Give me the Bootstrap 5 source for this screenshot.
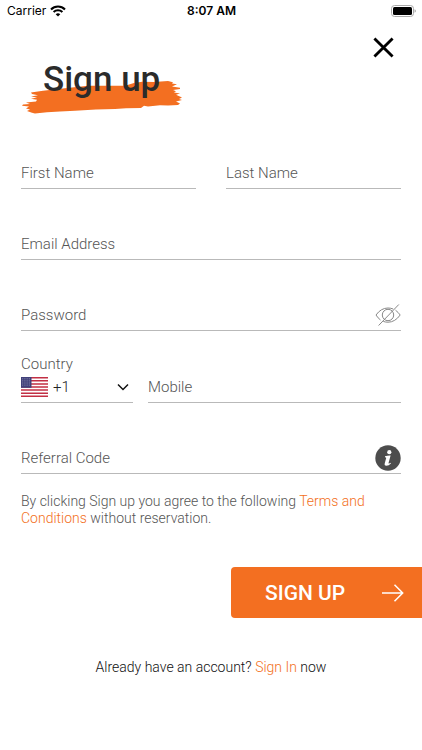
<!DOCTYPE html>
<html lang="en">
<head>
<meta charset="utf-8">
<meta name="viewport" content="width=device-width, initial-scale=1">
<title>Sign up</title>
<link rel="stylesheet" href="https://cdn.jsdelivr.net/npm/bootstrap@5.3.0/dist/css/bootstrap.min.css">
<style>
  body { font-family: Roboto, "Liberation Sans", sans-serif; font-weight: 300; font-size: 15px; color: #222; background: #fff; }
  .status-bar { display: grid; grid-template-columns: 1fr auto 1fr; height: 22px; padding: 0 6px 0 7px; font: 400 12px/22px Inter, sans-serif; color: #000; }
  .status-time { font-weight: 600; }
  .page-x { padding-left: 21px; padding-right: 21px; }
  .close-btn { margin: 15px 7px 0 0; line-height: 0; }
  .title-wrap { position: relative; width: 162px; height: 60px; margin-top: 34px; }
  .title-wrap svg { position: absolute; left: 1px; top: 23px; }
  .title-wrap h1 { position: relative; margin: 0; padding-left: 22px; font-size: 35px; line-height: 48px; font-weight: 500; color: #2b2b2b; white-space: nowrap; }
  .form-fields { margin-top: 41px; }
  .names { display: grid; grid-template-columns: 1fr 1fr; gap: 30px; }
  .field-row { margin-bottom: 39px; }
  .line-field { border-bottom: 1px solid #b9b9b9; height: 32px; }
  .line-field input, .line-field select { border: 0; border-radius: 0; background-color: transparent; padding: 0; height: 31px; font-size: 15px; line-height: 20px; font-weight: 300; color: #222; }
  .line-field input::placeholder { color: #555; opacity: 1; }
  .line-field .form-control:focus, .line-field .form-select:focus { box-shadow: none; }
  .password-row { margin-bottom: 26px; }
  .phone { display: grid; grid-template-columns: 112px 1fr; gap: 15px; align-items: end; }
  .phone label { display: block; line-height: 14px; color: #555; }
  .line-field select.form-select { background-image: url("data:image/svg+xml,%3Csvg xmlns='http://www.w3.org/2000/svg' viewBox='0 0 12 8'%3E%3Cpath d='M1 1.5l5 5 5-5' fill='none' stroke='%23111' stroke-width='1.5'/%3E%3C/svg%3E"); background-size: 12px 8px; background-position: right 4px center; padding-left: 5px; }
  .terms { margin: 19px 0 40px; font-size: 14px; line-height: 17px; color: #555; }
  .accent { color: #f36f21; text-decoration: none; }
  .submit-btn { width: 191px; height: 51px; padding: 0 18px 0 34px; border: 0; border-radius: 4px 0 0 4px; background: #f36f21; color: #fff; font-size: 21px; line-height: 26px; font-weight: 500; }
  .submit-btn:hover { background: #dd611a; color: #fff; }
  .sign-in { margin: 39px 0 0; font-size: 14px; line-height: 20px; color: #111; }
</style>
<script src="https://cdn.jsdelivr.net/npm/bootstrap@5.3.0/dist/js/bootstrap.bundle.min.js" defer></script>
</head>
<body>
<div class="status-bar">
  <div class="d-flex align-items-center gap-1">
    <span>Carrier</span>
    <svg width="16" height="12" viewBox="0 0 16 12" fill="none" stroke="#000" stroke-width="2.1" aria-hidden="true"><path d="M1 4.4a10 10 0 0 1 14 0M3.6 7.1a6.3 6.3 0 0 1 8.800 0"/><path d="M8 11.6L5.700 9.300a3.300 3.300 0 0 1 4.600 0z" fill="#000" stroke="none"/></svg>
  </div>
  <span class="status-time">8:07 AM</span>
  <div class="d-flex align-items-center justify-content-end">
    <svg width="25" height="12" viewBox="0 0 25 12" aria-hidden="true"><rect x=".5" y=".5" width="22" height="11" rx="3" fill="none" stroke="#aaa"/><rect x="2" y="2" width="19" height="8" rx="1.5"/><path d="M23.6 4.2q1.2.6 1.2 1.800t-1.200 1.800z" fill="#999"/></svg>
  </div>
</div>

<header class="page-x d-flex justify-content-between align-items-start">
  <div class="title-wrap">
    <svg width="162" height="36" viewBox="0 0 162 36" fill="#f36f21" aria-hidden="true"><path d="M9 13.500L21 11.800 43 9.300 66 6.800 103 6.700 112 4 120 2.700 132 3 146 2 151 3.200 150 4.500 155 5.300 150 7.500 158 8.800 158 10 151 11 154 12.300 152 13.500 158 14.500 154 15.800 160 18.500 157 20 160 21 154 22.500 158 24.500 156 26 146 26.500 138 26.200 126 27.500 122 26.800 119 29 104 29.200 93 30 74 30.500 53 31.800 38 32.500 25 33.200 13 34.500 10 33.800 5 32 8 30.500 4 29.500 7 27.500 0 26.800 1 25.500 8 25 4 23.500 14 22.500 15 20.800 9 19.800 15 18.600 9 17.500 16 16.300 10 15z"/></svg>
    <h1>Sign up</h1>
  </div>
  <button type="button" class="btn p-0 border-0 close-btn" aria-label="Close">
    <svg width="21" height="21" viewBox="0 0 22 22" fill="none" stroke="#000" stroke-width="3" aria-hidden="true"><path d="M1.500 1.500l19 19M20.500 1.500l-19 19"/></svg>
  </button>
</header>

<form>
  <div class="page-x form-fields">
    <div class="names field-row">
      <div class="line-field"><input class="form-control" type="text" placeholder="First Name" aria-label="First Name"></div>
      <div class="line-field"><input class="form-control" type="text" placeholder="Last Name" aria-label="Last Name"></div>
    </div>
    <div class="line-field field-row"><input class="form-control" type="email" placeholder="Email Address" aria-label="Email Address"></div>
    <div class="line-field password-row d-flex align-items-center">
      <input class="form-control" type="password" placeholder="Password" aria-label="Password">
      <button type="button" class="btn p-0 border-0 lh-1" aria-label="Show password">
        <svg width="26" height="22" viewBox="0 0 26 22" fill="none" stroke="#888" aria-hidden="true"><path d="M5.500 16Q3 14.200 1 11Q6 4 13 4q2.800 0 5.200 1M20.500 6.200Q23.200 8.200 25.200 11Q20 18.200 13 18.200q-2.500 0-4.700-.8M3.600 21.500L23.800.5"/><circle cx="13" cy="11" r="5.700"/></svg>
      </button>
    </div>
    <div class="phone field-row">
      <div>
        <label for="country">Country</label>
        <div class="line-field d-flex align-items-center">
          <svg class="flex-shrink-0" width="27" height="20" viewBox="0 0 27 20" aria-hidden="true"><path fill="#fff" d="M0 0h27v20H0z"/><path d="M0 .77h27M0 3.850h27M0 6.920h27M0 10h27M0 13.080h27M0 16.150h27M0 19.230h27" stroke="#c22f44" stroke-width="1.54"/><path fill="#41417a" d="M0 0h10.500v10.800H0z"/><path d="M1 1.800h9M1 3.900h9M1 6h9M1 8.100h9" stroke="#a5a5c4" stroke-width=".8" stroke-dasharray=".8 1"/></svg>
          <select class="form-select" id="country"><option>+1</option></select>
        </div>
      </div>
      <div class="line-field"><input class="form-control" type="tel" placeholder="Mobile" aria-label="Mobile"></div>
    </div>
    <div class="line-field d-flex align-items-center">
      <input class="form-control" type="text" placeholder="Referral Code" aria-label="Referral Code">
      <button type="button" class="btn p-0 border-0 lh-1" aria-label="About referral codes">
        <svg width="26" height="26" viewBox="0 0 26 26" aria-hidden="true"><circle cx="13" cy="13" r="12.700" fill="#4d4d4d"/><circle cx="14.300" cy="7.200" r="2.100" fill="#fff"/><path d="M10 11.300q2.400-.9 4.600-.9h1l-2 7.300q-.2 1 .4.900.7-.2 1.500-.8l.4.700q-2.100 2.200-4.500 2.200-2.200 0-1.700-2.200l1.500-5.500q.2-.7-1.200-.7z" fill="#fff"/></svg>
      </button>
    </div>
    <p class="terms">By clicking Sign up you agree to the following <a class="accent" href="#terms">Terms and Conditions</a> without reservation.</p>
  </div>
  <div class="d-flex justify-content-end">
    <button type="submit" class="btn submit-btn d-flex align-items-center justify-content-between">
      <span>SIGN UP</span>
      <svg width="22" height="18" viewBox="0 0 22 18" fill="none" stroke="#fff" stroke-width="1.500" aria-hidden="true"><path d="M0 9h20.500M12.500.8L20.700 9l-8.200 8.200"/></svg>
    </button>
  </div>
</form>
<p class="sign-in text-center">Already have an account? <a class="accent" href="#signin">Sign In</a> now</p>
</body>
</html>
